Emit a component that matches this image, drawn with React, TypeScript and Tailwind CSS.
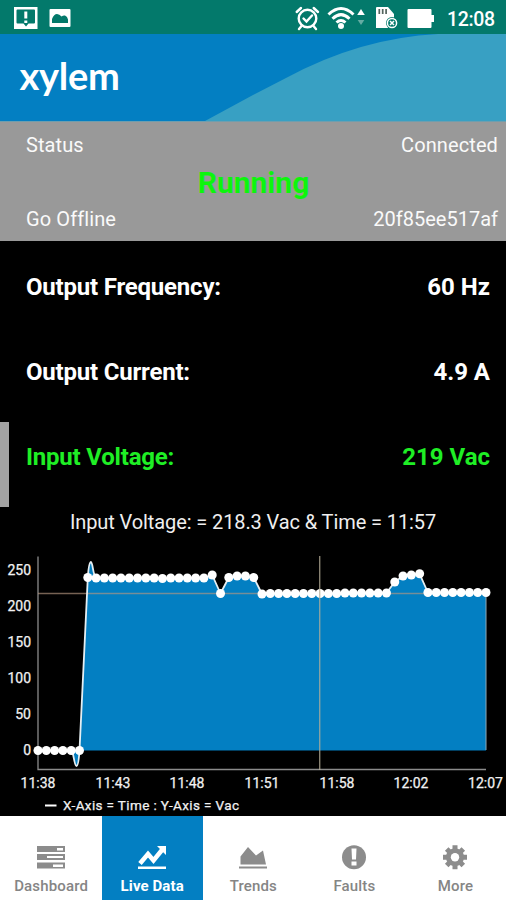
import React from "react";

const STEP = 448 / 54;
const levels: number[] = [
  750.5, 750.5, 750.5, 750.5, 750.5, 750.5,
  577.5, 578, 578, 578, 578, 578, 578, 578, 578, 578.5, 578, 578, 578, 578, 578,
  575, 593.5, 577.5, 576, 576, 577.5,
  594, 593.5, 593.5, 593.5, 593.5, 593.5, 593.5, 593.5, 593.5, 593.5, 593, 593, 593, 593, 593, 593,
  582, 576, 575, 573.8,
  592.5, 592.5, 592.5, 592.5, 592.5, 592.5, 592.5, 592.5,
];
const points = levels.map((y, i) => ({ x: 38 + i * STEP, y: y - 545 }));
const at = (list: { x: number; y: number }[]) =>
  list.map((p) => `${p.x.toFixed(1)} ${p.y}`).join(" L");
const curve =
  `M${at(points.slice(0, 5))} C73.5 205 74 221 76.5 221 C78.5 221 79 212 79.5 205.5 ` +
  `L87.8 32.5 C88.5 22 89.5 17 91 17 C92.7 17 93 31 96.1 33 L${at(points.slice(8))}`;

const yLabels = [
  { t: "250", y: 30 },
  { t: "200", y: 66 },
  { t: "150", y: 102 },
  { t: "100", y: 138 },
  { t: "50", y: 173.5 },
  { t: "0", y: 209.5 },
];
const xLabels = [
  { t: "11:38", x: 38 },
  { t: "11:43", x: 113 },
  { t: "11:48", x: 187 },
  { t: "11:51", x: 262 },
  { t: "11:58", x: 337 },
  { t: "12:02", x: 411 },
  { t: "12:07", x: 485.5 },
];

function StatusBar() {
  return (
    <div className="flex h-[34px] items-center bg-[#03796b] text-white">
      <svg width="506" height="34" viewBox="0 0 506 34" fill="none">
        <rect x="14" y="7" width="23.5" height="22" fill="#fff" />
        <path d="M17.500 9.500h16.500q1 0 1 1v12q0 1-1 1h-5.500l-2.500 3-2.500-3H17.500q-1 0-1-1v-12q0-1 1-1z" fill="#03796b" />
        <path d="M25.800 11.500v7M25.800 20.500v2.500" stroke="#fff" strokeWidth="3" />
        <rect x="49.500" y="9" width="21" height="18" rx="1" fill="#fff" />
        <path d="M52 23v-4q2-5 5-5 2.500 0 4.500 2.500 2-1.500 3.500-1 2.500 1 3 4V23z" fill="#03796b" />
        <g stroke="#fff" strokeWidth="2.400" strokeLinecap="round">
          <circle cx="307.500" cy="18.500" r="8.800" />
          <path d="m303.500 18.500 3 3 5.500-6M296.700 12l4.300-4M318 12l-4.300-4M301.500 26l-2.500 3M313.500 26l2.500 3" />
        </g>
        <g stroke="#fff" strokeWidth="3">
          <path d="M328.500 14.500Q341 2.500 353.500 14.500M332.500 18.800Q341 10.500 349.500 18.800M336.500 22.500Q341 18.500 345.500 22.500" />
        </g>
        <circle cx="341" cy="26" r="3" fill="#fff" />
        <path d="m361 9 3.800 6h-7.600z" fill="#fff" />
        <path d="m361 25 3.300-5h-6.600z" fill="#65aca3" />
        <path d="M377 7h11l6 7v14h-18V8q0-1 1-1z" fill="#fff" />
        <path d="M379.300 9v5M382.700 9v5M386.100 9v5" stroke="#53645e" strokeWidth="1.700" />
        <circle cx="392" cy="23" r="6" fill="#03796b" />
        <circle cx="392" cy="23" r="4.600" stroke="#fff" strokeWidth="1.500" />
        <path d="m390 21 4 4m0-4-4 4" stroke="#fff" strokeWidth="1.500" />
        <path d="M408.500 9h22q1 0 1 1v5h2.500v7h-2.500v5q0 1-1 1h-22q-1 0-1-1V10q0-1 1-1z" fill="#fff" />
        <text x="447" y="26" fontFamily="Roboto, sans-serif" fontSize="19.500" fontWeight="500" fill="#fff" textLength="48">12:08</text>
      </svg>
    </div>
  );
}

function Header() {
  return (
    <header className="relative h-[87px] bg-[#037fc2]">
      <svg className="absolute inset-0" width="506" height="87" viewBox="0 0 506 87">
        <path d="M205 87L253 61L286 44Q360 4 438 0H506V87z" fill="#38a0c3" />
      </svg>
      <div className="relative pl-[19.5px] pt-[18px] font-['Lato',sans-serif] text-[38px] font-bold leading-[46px] tracking-[-0.3px] text-white">
        xylem
      </div>
    </header>
  );
}

function StatusPanel() {
  return (
    <section className="flex h-[120px] flex-col border-t border-[#6f9eae] bg-[#999] pl-[26px] pr-2 text-[20px] leading-6 text-[#fafafa]">
      <div className="flex justify-between pt-[11px]">
        <span className="tracking-[0.1px]">Status</span>
        <span className="tracking-[0.1px]">Connected</span>
      </div>
      <div className="mr-[17px] h-[50px] pt-[10px] text-center text-[30px] font-bold leading-8 text-[#0df50d]">
        Running
      </div>
      <div className="flex justify-between">
        <span className="tracking-[0.1px]">Go Offline</span>
        <span>20f85ee517af</span>
      </div>
    </section>
  );
}

function Reading({ label, value, active }: { label: string; value: string; active?: boolean }) {
  return (
    <div className={`flex h-[85px] items-center justify-between border-l-[9.5px] pb-[16px] pl-[17px] pr-4 text-[24px] font-bold ${active ? "border-[#a3a3a3] text-[#1fee25]" : "border-black text-white"}`}>
      <span className="tracking-[-0.2px]">{label}</span>
      <span>{value}</span>
    </div>
  );
}

function Chart() {
  return (
    <svg width="506" height="271" viewBox="0 0 506 271" className="block shrink-0" fontFamily="Roboto, sans-serif">
      <path d={`${curve} L486 205.500 L38 205.500z`} fill="#037fc2" />
      <path d="M38 11.500V224.500H486" fill="none" stroke="#8b8b8b" strokeWidth="1.300" />
      <path d="M38 48.500H486" stroke="#b69780" strokeOpacity="0.650" strokeWidth="1.500" />
      <path d="M486 48V205" stroke="#91a9b5" strokeWidth="1" />
      <path d={curve} fill="none" stroke="#e5eef2" strokeWidth="1.800" strokeLinejoin="round" />
      {points.map((p, i) => (
        <circle key={i} cx={p.x} cy={p.y} r="4.500" fill="#fff" />
      ))}
      <path d="M319.700 11V225" stroke="#b5ad98" strokeOpacity="0.750" strokeWidth="1.400" />
      <g fill="#f2f2f2" fontSize="14" stroke="#f2f2f2" strokeWidth="0.250">
        {yLabels.map((l) => (
          <text key={l.t} x="31" y={l.y} textAnchor="end">{l.t}</text>
        ))}
        {xLabels.map((l) => (
          <text key={l.t} x={l.x} y="242.500" textAnchor="middle">{l.t}</text>
        ))}
        <text x="63" y="265" fontSize="13.500" textLength="176">X-Axis = Time : Y-Axis = Vac</text>
      </g>
      <path d="M45 260.500H56.500" stroke="#fff" strokeWidth="2" />
    </svg>
  );
}

const DashboardIcon = (
  <svg width="30" height="26" viewBox="0 0 30 26">
    <path d="M1 2h28v6H1zM1 10h28v6H1zM1 18.500h28v6H1z" fill="#8c8c8c" />
    <path d="M21 4h6v2.500h-6zM11 12h16v2H11zM17 20.500h10V23H17z" fill="#fff" />
  </svg>
);
const LiveIcon = (
  <svg width="30" height="26" viewBox="0 0 30 26">
    <path d="m3 19.500 8-9.500 5.500 6.500L25 6" fill="none" stroke="#fff" strokeWidth="4.500" />
    <path d="M20 2h9v9zM1 22.500h28V25H1z" fill="#fff" />
  </svg>
);
const TrendsIcon = (
  <svg width="30" height="26" viewBox="0 0 30 26" fill="#8c8c8c">
    <path d="M2.500 20.500v-8L10 3l8 8.500 7-5 3 14zM1 22.500h28v2H1z" />
  </svg>
);
const FaultsIcon = (
  <svg width="30" height="26" viewBox="0 0 30 26">
    <circle cx="15" cy="13.200" r="12" fill="#8c8c8c" />
    <path d="M12.500 4.500h5l-.5 11h-4zM12.500 17.500h5v4h-5z" fill="#fff" />
  </svg>
);
const MoreIcon = (
  <svg width="30" height="26" viewBox="0 0 30 26">
    <g stroke="#8c8c8c" strokeWidth="5">
      <path d="M15 1.200v24M3 13.200h24M6.700 4.900l16.600 16.600M23.300 4.900 6.700 21.500" />
    </g>
    <circle cx="15" cy="13.200" r="9" fill="#8c8c8c" />
    <circle cx="15" cy="13.200" r="4.200" fill="#fff" />
  </svg>
);

function Tab({ icon, label, active }: { icon: React.ReactNode; label: string; active?: boolean }) {
  return (
    <div className={`flex flex-1 flex-col items-center pt-[28px] text-[15px] leading-5 ${active ? "bg-[#037fc2] font-bold tracking-[0.1px] text-white" : "font-medium tracking-[0.15px] text-[#858585]"}`}>
      {icon}
      <span className="mt-[6px]">{label}</span>
    </div>
  );
}

export default function App() {
  return (
    <main className="flex h-[900px] w-[506px] flex-col overflow-hidden bg-black font-['Roboto',sans-serif]">
      <StatusBar />
      <Header />
      <StatusPanel />
      <div className="flex shrink-0 flex-col pt-[11px]">
        <Reading label="Output Frequency:" value="60 Hz" />
        <Reading label="Output Current:" value="4.9 A" />
        <Reading label="Input Voltage:" value="219 Vac" active />
      </div>
      <div className="h-[38px] shrink-0 pt-[3px] text-center text-[20px] leading-6 tracking-[-0.1px] text-[#efefef]">
        Input Voltage: = 218.3 Vac &amp; Time = 11:57
      </div>
      <Chart />
      <nav className="flex h-[84px] shrink-0 bg-white pl-[0.6px]">
        <Tab icon={DashboardIcon} label="Dashboard" />
        <Tab icon={LiveIcon} label="Live Data" active />
        <Tab icon={TrendsIcon} label="Trends" />
        <Tab icon={FaultsIcon} label="Faults" />
        <Tab icon={MoreIcon} label="More" />
      </nav>
    </main>
  );
}
